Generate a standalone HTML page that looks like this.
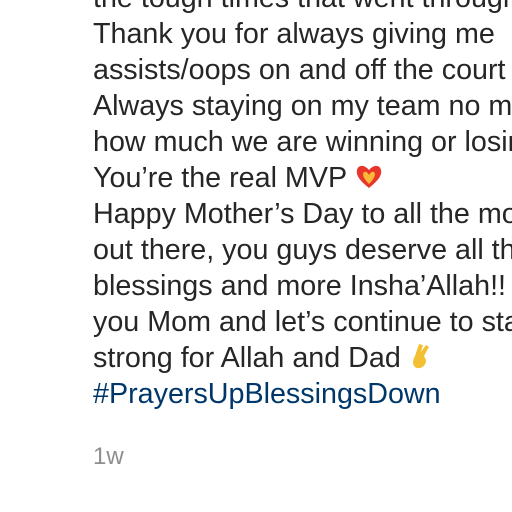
<!DOCTYPE html>
<html><head><meta charset="utf-8"><style>
html,body{margin:0;padding:0;background:#fff;width:512px;height:512px;overflow:hidden}
.t{position:absolute;left:93px;top:-20px;width:419px;overflow:hidden;font-family:"Liberation Sans",sans-serif;font-size:28.7px;line-height:36px;color:#262626;white-space:nowrap}
.h{color:#00376b}
.w{position:absolute;left:93px;top:443px;font-family:"Liberation Sans",sans-serif;font-size:24px;color:#8e8e8e}
svg{vertical-align:-3px}
</style></head><body>
<div class="t">
the tough times that went through<br>
Thank you for always giving me<br>
assists/oops on and off the court<br>
Always staying on my team no matter<br>
how much we are winning or losing<br>
You’re the real MVP <svg width="28" height="28" viewBox="0 0 28 26"><path d="M14 25 C4 17 1 12 2 7 C3 2 9 1 14 7 C19 1 25 2 26 7 C27 12 24 17 14 25Z" fill="#e8362b"/><path d="M14 21 C8 15 7 11 9 9 C11 8 13 10 14 12 C15 10 17 8 19 9 C21 11 20 15 14 21Z" fill="#fbb93a"/></svg><br>
Happy Mother’s Day to all the moms<br>
out there, you guys deserve all the<br>
blessings and more Insha’Allah!! Love<br>
you Mom and let’s continue to stay<br>
strong for Allah and Dad <svg width="24" height="28" viewBox="0 0 24 28"><path d="M6 14 L10 2 L14 3 L12 10 L17 3 L20 5 L15 14 L17 18 C17 24 12 27 8 26 C4 25 3 20 5 16Z" fill="#f4c033"/></svg><br>
<span class="h">#PrayersUpBlessingsDown</span>
</div>
<div class="w">1w</div>
</body></html>
